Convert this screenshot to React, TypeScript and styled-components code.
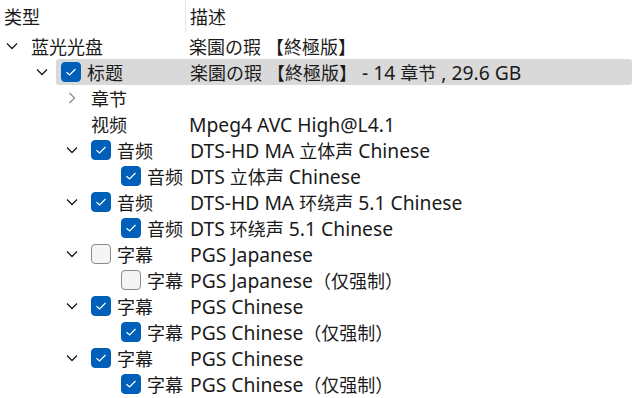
import React from 'react';
import styled, { createGlobalStyle } from 'styled-components';

type Node = {
  type: string;
  desc: string;
  level: number;
  expand?: 'open' | 'closed';
  checked?: boolean;
  selected?: boolean;
};

const rows: Node[] = [
  { type: '蓝光光盘', desc: '楽園の瑕 【終極版】', level: 0, expand: 'open' },
  { type: '标题', desc: '楽園の瑕 【終極版】 - 14 章节 , 29.6 GB', level: 1, expand: 'open', checked: true, selected: true },
  { type: '章节', desc: '', level: 2, expand: 'closed' },
  { type: '视频', desc: 'Mpeg4 AVC High@L4.1', level: 2 },
  { type: '音频', desc: 'DTS-HD MA 立体声 Chinese', level: 2, expand: 'open', checked: true },
  { type: '音频', desc: 'DTS 立体声 Chinese', level: 3, checked: true },
  { type: '音频', desc: 'DTS-HD MA 环绕声 5.1 Chinese', level: 2, expand: 'open', checked: true },
  { type: '音频', desc: 'DTS 环绕声 5.1 Chinese', level: 3, checked: true },
  { type: '字幕', desc: 'PGS Japanese', level: 2, expand: 'open', checked: false },
  { type: '字幕', desc: 'PGS Japanese（仅强制）', level: 3, checked: false },
  { type: '字幕', desc: 'PGS Chinese', level: 2, expand: 'open', checked: true },
  { type: '字幕', desc: 'PGS Chinese（仅强制）', level: 3, checked: true },
  { type: '字幕', desc: 'PGS Chinese', level: 2, expand: 'open', checked: true },
  { type: '字幕', desc: 'PGS Chinese（仅强制）', level: 3, checked: true },
];

// 描述列的起点
const DESC_X = 190;

// 中日文字符在 Windows 上用的是缩小的回退字体，这里单独包一层
const CJK_RUN = /([\u3000-\u30ff\u3400-\u9fff\uff00-\uffef]+)/;

const MixedText: React.FC<{ text: string }> = ({ text }) => (
  <>
    {text.split(CJK_RUN).map((part, i) =>
      i % 2 === 1 ? <Cjk key={i}>{part}</Cjk> : part
    )}
  </>
);

const Chevron: React.FC<{ dir: 'open' | 'closed' }> = ({ dir }) =>
  dir === 'open' ? (
    <svg width="12" height="8" viewBox="0 0 12 8">
      <polyline points="1,1.5 6,6.5 11,1.5" fill="none" stroke="#1b1b1b" strokeWidth="1.3" />
    </svg>
  ) : (
    <svg width="8" height="12" viewBox="0 0 8 12">
      <polyline points="1.5,1 6.5,6 1.5,11" fill="none" stroke="#8b8b8b" strokeWidth="1.3" />
    </svg>
  );

const CheckBox: React.FC<{ checked: boolean }> = ({ checked }) => (
  <Box $checked={checked}>
    {checked && (
      <svg width="12" height="10" viewBox="0 0 12 10">
        <polyline points="1.5,5.2 4.6,8 10.5,2" fill="none" stroke="#fff" strokeWidth="1.2" />
      </svg>
    )}
  </Box>
);

export default function App() {
  return (
    <>
      <GlobalStyle />
      <Tree>
        <Header>
          <HeadCell><Cjk>类型</Cjk></HeadCell>
          <Divider />
          <HeadCell><Cjk>描述</Cjk></HeadCell>
        </Header>
        {rows.map((r, i) => {
          const bodyStart = 26 + r.level * 30;
          const textStart = r.checked === undefined ? bodyStart + 6 : bodyStart + 31;
          return (
            <Row key={i} $indent={2 + r.level * 30}>
              <Expander>{r.expand && <Chevron dir={r.expand} />}</Expander>
              <Body $selected={!!r.selected}>
                {r.checked !== undefined && <CheckBox checked={r.checked} />}
                <TypeLabel $width={DESC_X - textStart}>
                  <MixedText text={r.type} />
                </TypeLabel>
                <Desc>
                  <MixedText text={r.desc} />
                </Desc>
              </Body>
            </Row>
          );
        })}
      </Tree>
    </>
  );
}

const GlobalStyle = createGlobalStyle`
  html, body {
    margin: 0;
    padding: 0;
    background: #ffffff;
    overflow: hidden;
  }
  body {
    font-family: "Noto Sans", "Noto Sans CJK SC", sans-serif;
    color: #1a1a1a;
  }
`;

const Tree = styled.div`
  width: 632px;
  height: 398px;
  font-size: 19.3px;
`;

const Cjk = styled.span`
  font-family: "Noto Sans CJK SC", "Noto Sans", sans-serif;
  font-size: 18px;
`;

const Header = styled.div`
  display: flex;
  height: 33px;
  align-items: stretch;
`;

const HeadCell = styled.div`
  display: flex;
  align-items: center;
  padding-left: 4px;
  width: 181px;
  padding-bottom: 1px;

  & + & {
    padding-left: 6px;
    width: auto;
  }
`;

const Divider = styled.div`
  width: 1px;
  height: 32px;
  background: #e5e5e5;
`;

const Row = styled.div<{ $indent: number }>`
  display: flex;
  height: 26px;
  padding-left: ${p => p.$indent}px;
`;

const Expander = styled.div`
  width: 24px;
  flex: none;
  display: flex;
  align-items: center;
  justify-content: center;
  padding-right: 4px;
  box-sizing: border-box;
`;

const Body = styled.div<{ $selected: boolean }>`
  flex: 1;
  display: flex;
  align-items: center;
  padding-left: 5px;
  background: ${p => (p.$selected ? '#d9d9d9' : 'transparent')};
  border-radius: 3px;
  white-space: nowrap;
`;

const Box = styled.div<{ $checked: boolean }>`
  flex: none;
  width: 20px;
  height: 20px;
  box-sizing: border-box;
  margin-right: 6px;
  border-radius: 4px;
  display: flex;
  align-items: center;
  justify-content: center;
  background: ${p => (p.$checked ? '#005fb8' : '#f5f5f5')};
  border: 1px solid ${p => (p.$checked ? '#005fb8' : '#8a8a8a')};
`;

const TypeLabel = styled.span<{ $width: number }>`
  flex: none;
  width: ${p => p.$width}px;
  overflow: visible;
`;

const Desc = styled.span`
  flex: none;
`;
